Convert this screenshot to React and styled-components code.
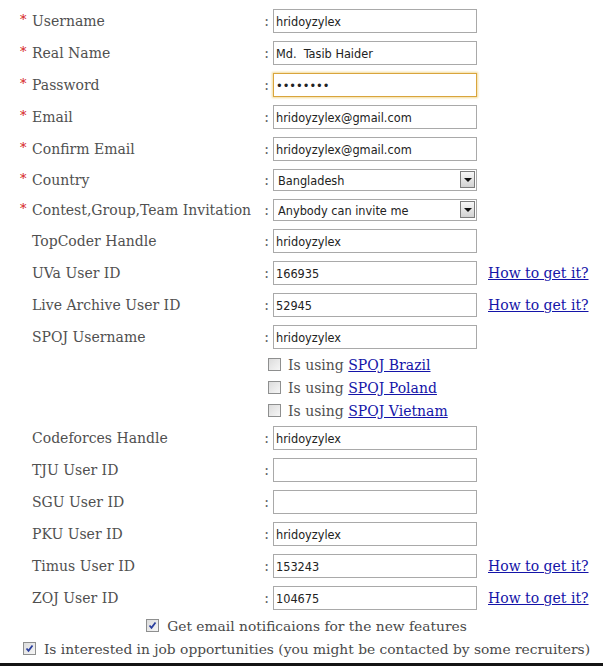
import React from 'react';
import styled, { createGlobalStyle } from 'styled-components';

const GlobalStyle = createGlobalStyle`
  html, body {
    margin: 0;
    padding: 0;
    background: #fff;
  }
  body {
    font-family: "DejaVu Serif", "Liberation Serif", serif;
    font-size: 14px;
    color: #505050;
  }
`;

const inputFont = `"DejaVu Sans Condensed", "DejaVu Sans", sans-serif`;

const Page = styled.div`
  width: 603px;
  height: 666px;
  overflow: hidden;
  display: flex;
  flex-direction: column;
`;

const Form = styled.form`
  padding: 5px 0 0 20px;
  display: flex;
  flex-direction: column;
`;

const Row = styled.div`
  display: grid;
  grid-template-columns: 12px 226px 15px 204px auto;
  align-items: center;
  height: ${(p) => p.h || 32}px;
`;

const Star = styled.span`
  color: #d42020;
  font-size: 13px;
  align-self: center;
  margin-top: -3px;
`;

const Label = styled.span`
  white-space: nowrap;
`;

const Colon = styled.span`
  text-align: center;
  color: #606060;
  padding-left: 2px;
`;

const TextInput = styled.input`
  box-sizing: border-box;
  width: 204px;
  height: 24px;
  margin: 0;
  padding: 0 2px;
  border: 1px solid ${(p) => (p.$focused ? '#d9a53c' : '#a9a9a9')};
  box-shadow: ${(p) => (p.$focused ? '0 0 2px 1px #f3dc9c' : 'none')};
  outline: none;
  font-family: ${inputFont};
  font-size: 12.6px;
  color: #222;
  background: #fff;
`;

const SelectWrap = styled.div`
  position: relative;
  width: 204px;
  height: 22px;
`;

const Select = styled.select`
  box-sizing: border-box;
  appearance: none;
  width: 100%;
  height: 100%;
  margin: 0;
  padding: 0 0 0 4px;
  border: 1px solid #a9a9a9;
  border-radius: 0;
  background: #fff;
  font-family: ${inputFont};
  font-size: 12.6px;
  color: #222;
  outline: none;
`;

const ArrowBox = styled.span`
  position: absolute;
  top: 2px;
  right: 2px;
  width: 15px;
  height: 17px;
  box-sizing: border-box;
  border: 1px solid #7d7d7d;
  background: linear-gradient(#f8f8f8, #d2d2d2);
  pointer-events: none;
  display: flex;
  align-items: center;
  justify-content: center;

  &::after {
    content: '';
    border-left: 4px solid transparent;
    border-right: 4px solid transparent;
    border-top: 4px solid #111;
  }
`;

const Link = styled.a`
  margin-left: ${(p) => (p.$inline ? 0 : 11)}px;
  color: #1414a8;
  text-decoration: underline;
  white-space: nowrap;
  cursor: pointer;
`;

const OptionRow = styled.label`
  display: flex;
  align-items: center;
  gap: 7px;
  height: 23px;
  padding-left: 248px;
  white-space: nowrap;
`;

const FooterRow = styled.label`
  display: flex;
  align-items: center;
  justify-content: center;
  gap: 8px;
  height: ${(p) => p.h}px;
  padding-left: ${(p) => p.shift || 0}px;
  white-space: nowrap;
  font-size: 13.8px;
  color: #4a4a4a;
`;

const Box = styled.span`
  box-sizing: border-box;
  width: 13px;
  height: 13px;
  flex: none;
  border: 1px solid #8e8f8f;
  background: linear-gradient(135deg, #dcdcdc, #f6f6f6);
  display: flex;
  align-items: center;
  justify-content: center;
  margin-top: -1px;
`;

const BottomBar = styled.div`
  margin-top: 3px;
  height: 3px;
  background: #141414;
`;

function Checkbox({ checked }) {
  return (
    <Box>
      {checked && (
        <svg width="9" height="9" viewBox="0 0 9 9">
          <path d="M1.5 4.5 L3.5 6.8 L7.5 1.5" fill="none" stroke="#2a3f9e" strokeWidth="1.8" />
        </svg>
      )}
    </Box>
  );
}

const fieldsTop = [
  { label: 'Username', value: 'hridoyzylex', req: true },
  { label: 'Real Name', value: 'Md.  Tasib Haider', req: true },
  { label: 'Password', value: 'password', req: true, type: 'password', focused: true },
  { label: 'Email', value: 'hridoyzylex@gmail.com', req: true },
  { label: 'Confirm Email', value: 'hridoyzylex@gmail.com', req: true },
];

const selects = [
  { label: 'Country', value: 'Bangladesh' },
  { label: 'Contest,Group,Team Invitation', value: 'Anybody can invite me' },
];

const fieldsMid = [
  { label: 'TopCoder Handle', value: 'hridoyzylex' },
  { label: 'UVa User ID', value: '166935', link: true },
  { label: 'Live Archive User ID', value: '52945', link: true },
  { label: 'SPOJ Username', value: 'hridoyzylex' },
];

const spoj = ['SPOJ Brazil', 'SPOJ Poland', 'SPOJ Vietnam'];

const fieldsBottom = [
  { label: 'Codeforces Handle', value: 'hridoyzylex' },
  { label: 'TJU User ID', value: '' },
  { label: 'SGU User ID', value: '' },
  { label: 'PKU User ID', value: 'hridoyzylex' },
  { label: 'Timus User ID', value: '153243', link: true },
  { label: 'ZOJ User ID', value: '104675', link: true },
];

function Field({ f }) {
  return (
    <Row>
      <Star>{f.req ? '*' : ''}</Star>
      <Label>{f.label}</Label>
      <Colon>:</Colon>
      <TextInput type={f.type || 'text'} defaultValue={f.value} $focused={f.focused} />
      {f.link && <Link>How to get it?</Link>}
    </Row>
  );
}

export default function App() {
  return (
    <Page>
      <GlobalStyle />
      <Form>
        {fieldsTop.map((f) => <Field key={f.label} f={f} />)}
        {selects.map((s) => (
          <Row key={s.label} h={30}>
            <Star>*</Star>
            <Label>{s.label}</Label>
            <Colon>:</Colon>
            <SelectWrap>
              <Select defaultValue={s.value}>
                <option>{s.value}</option>
              </Select>
              <ArrowBox />
            </SelectWrap>
          </Row>
        ))}
        {fieldsMid.map((f) => <Field key={f.label} f={f} />)}
        {spoj.map((s) => (
          <OptionRow key={s}>
            <Checkbox />
            <span>Is using <Link $inline>{s}</Link></span>
          </OptionRow>
        ))}
        {fieldsBottom.map((f) => <Field key={f.label} f={f} />)}
      </Form>
      <FooterRow h={24} shift={10}>
        <Checkbox checked />
        <span>Get email notificaions for the new features</span>
      </FooterRow>
      <FooterRow h={22} shift={10}>
        <Checkbox checked />
        <span>Is interested in job opportunities (you might be contacted by some recruiters)</span>
      </FooterRow>
      <BottomBar />
    </Page>
  );
}
